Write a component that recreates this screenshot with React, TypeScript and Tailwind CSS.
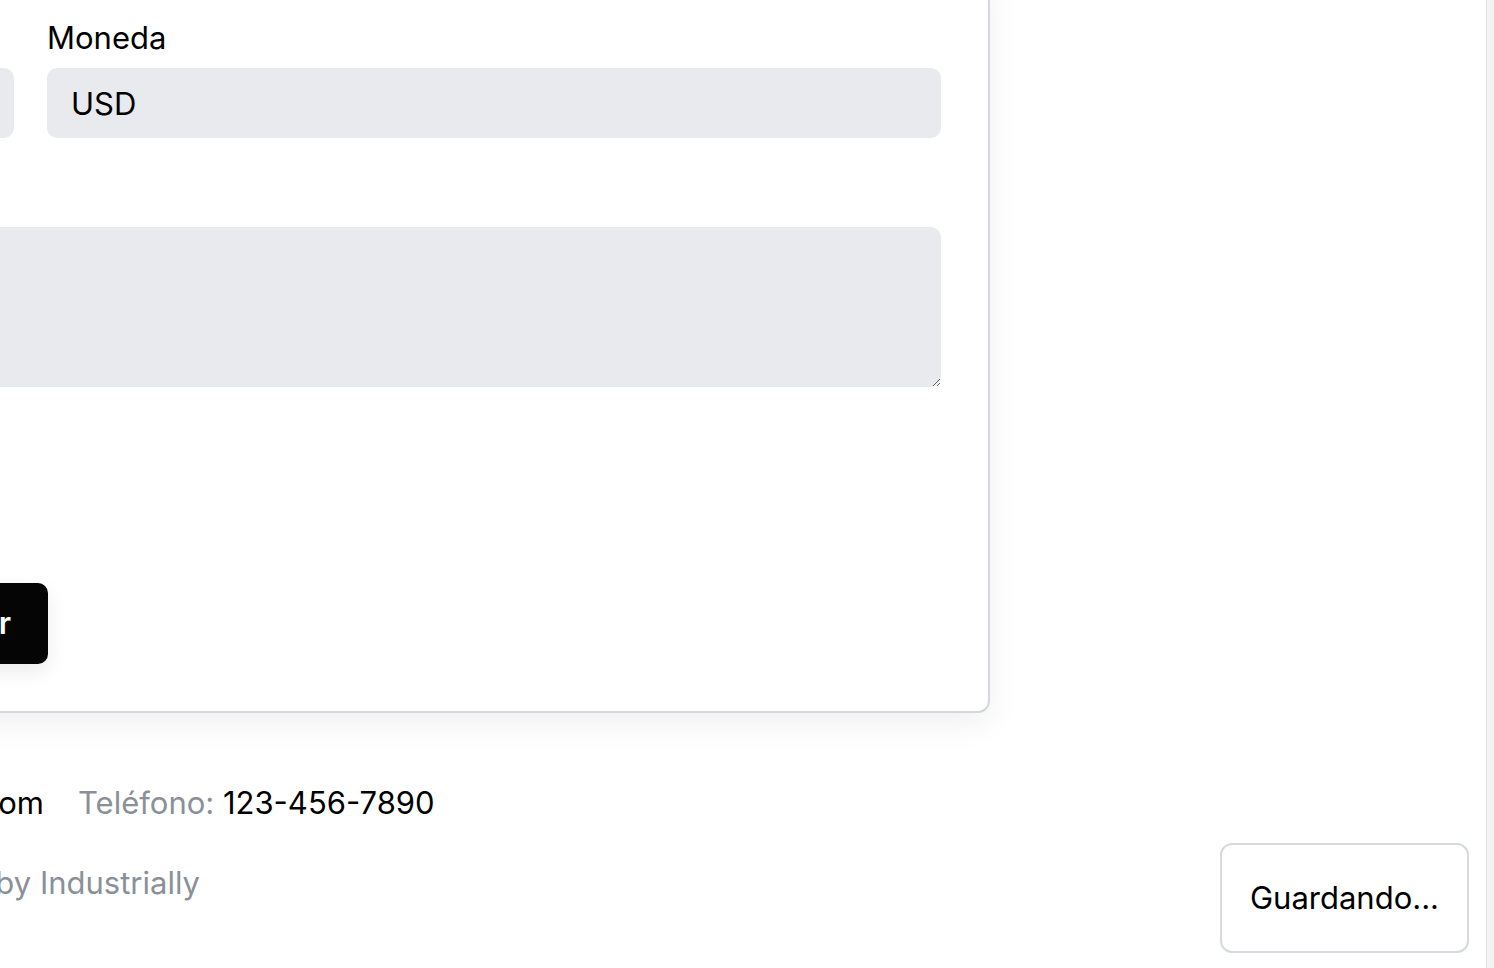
export default function App() {
  return (
    <div className="flex h-[968px] overflow-hidden bg-white font-['Inter',sans-serif] text-black">
      <main className="relative min-w-0 flex-1 overflow-hidden">
        <div className="-ml-[929px] -mt-[32px] w-[1919px]">
          {/* Form card */}
          <section className="rounded-[12px] border-2 border-[#d4d7dc] bg-white px-[47px] pb-[47px] pt-[48px] shadow-[0_12px_32px_rgba(0,0,0,0.06)]">
            <div className="grid grid-cols-2 gap-x-[33px] gap-y-[39px]">
              <div>
                <label className="mb-[10px] block h-10 text-[31px] leading-10">Fecha</label>
                <input
                  className="h-[70px] w-full rounded-[10px] bg-[#e9eaee] px-6 text-[31px] outline-none"
                  defaultValue="2024-05-14"
                />
              </div>
              <div>
                <label className="mb-[10px] block h-10 text-[31px] leading-10">Moneda</label>
                <input
                  className="h-[70px] w-full rounded-[10px] bg-[#e9eaee] px-6 text-[31px] outline-none"
                  defaultValue="USD"
                />
              </div>
              <div className="col-span-2">
                <label className="mb-[10px] block h-10 text-[31px] leading-10">Notas</label>
                <textarea className="block h-[160px] w-full rounded-[10px] bg-[#e9eaee] px-6 py-4 text-[31px] outline-none" />
              </div>
            </div>

            <div className="mt-[196px] flex justify-end pr-[893px]">
              <button className="h-[81px] rounded-[10px] bg-[#050505] px-[37px] text-[31px] font-semibold text-white shadow-[0_8px_20px_rgba(0,0,0,0.08)]">
                Guardar
              </button>
            </div>
          </section>

          {/* Footer */}
          <footer className="mt-[70px] pl-[479px] text-[31px] leading-10">
            <div className="flex gap-[34px]">
              <span className="w-[494px] shrink-0 whitespace-nowrap text-right">
                <span className="text-[#8a9099]">Email: </span>contacto@industrially.com
              </span>
              <span className="whitespace-nowrap">
                <span className="text-[#8a9099]">Teléfono: </span>123-456-7890
              </span>
            </div>
            <p className="mt-10 w-[650px] whitespace-nowrap text-right text-[#8a9099]">
              © 2024 Powered by Industrially
            </p>
          </footer>
        </div>
      </main>

      {/* scrollbar track */}
      <div className="w-2 shrink-0 border-l border-[#e3e3e3] bg-[#f3f3f3]" />

      {/* saving toast */}
      <div className="fixed bottom-[15px] right-[25px] flex h-[110px] w-[249px] items-center justify-center rounded-[12px] border-2 border-[#d6d9de] bg-white text-[31px]">
        Guardando...
      </div>
    </div>
  );
}
